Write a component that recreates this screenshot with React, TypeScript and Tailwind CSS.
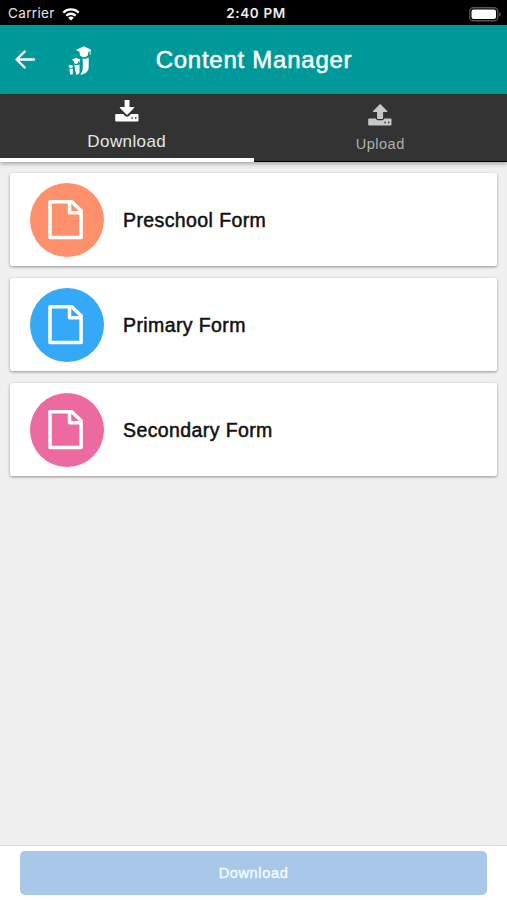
// App.tsx - Content manager screen with download / upload tabs and a list of forms

import React, { useState } from 'react';

type TabName = 'download' | 'upload';

interface FormItem {
    id: number;
    title: string;
    color: string;
}

const forms: FormItem[] = [
    { id: 1, title: 'Preschool Form', color: 'bg-[#fe916b]' },
    { id: 2, title: 'Primary Form', color: 'bg-[#36a8f8]' },
    { id: 3, title: 'Secondary Form', color: 'bg-[#ec6a9f]' },
];

const WifiIcon: React.FC = () => (
    <svg width="18" height="13" viewBox="0 0 18 13" fill="none" stroke="#fff" strokeWidth="2.3">
        <path d="M1.3 4.6a11 11 0 0 1 15.4 0" />
        <path d="M4.3 7.7a6.7 6.7 0 0 1 9.4 0" />
        <path d="M6.2 9.8a4 4 0 0 1 5.6 0L9 12.6z" fill="#fff" stroke="none" />
    </svg>
);

const BatteryIcon: React.FC = () => (
    <svg width="33" height="15" viewBox="0 0 33 15">
        <rect x="0.75" y="0.75" width="28" height="13" rx="3.6" fill="none" stroke="#555" strokeWidth="1.3" />
        <rect x="2.5" y="2.5" width="24.5" height="9.5" rx="2" fill="#fff" />
        <path d="M30.2 5.2q1.7.6 1.7 2.2t-1.7 2.2z" fill="#555" />
    </svg>
);

const BackIcon: React.FC = () => (
    <svg width="22" height="20" viewBox="0 0 22 20" fill="none" stroke="#fff" strokeWidth="2.4" strokeLinecap="round" strokeLinejoin="round">
        <path d="M20 9.5H2.6M10.7 1.5l-8.1 8 8.1 8" />
    </svg>
);

// Three growing students with graduation caps
const Logo: React.FC = () => (
    <svg width="24" height="30" viewBox="0 0 24 30" fill="#fff">
        <path d="M8 4.1 15.8.3l7.7 3.8-1.1.7.4 3.7h-1l-.1-3.1-1.6.8v1.9c0 1.8-1.6 3.1-4.1 3.1s-4.3-1.3-4.3-3.1V5.9z" />
        <path d="M14.5 12.6c2 .6 4.2.3 6.2-1.1v9.6c0 4.1-2.7 6.9-7.6 7.6-.7.1-.9-.4-.4-.9 1.5-1.5 2.1-3.4 2.1-6.5 0-3.3.1-6-.3-8.7z" />
        <path d="M3.9 13.8 8.1 11.7l4.5 2.1-.7.5v2.2h-.7v-1.8l-.8.4c.2 1.8-.7 2.8-2.3 2.8s-2.3-1-2.2-2.6z" />
        <path d="M6.3 18.6c1.7.9 3.5.8 5.2-.4v7.6c0 1.8-1.2 2.9-3.6 3 .3-1.2.1-2-.5-3z" />
        <path d="m.2 20 2.5-1.2 2.7 1.2-.9.7c0 1-.7 1.7-1.7 1.7s-1.6-.7-1.6-1.6z" />
        <path d="M1.5 22.8c.9.4 2.3.3 3.3-.2v4.8c0 .8-.7 1.2-1.5 1.2-.8-.1-1.3-.5-1.3-1.3z" />
    </svg>
);

const DownloadIcon: React.FC = () => (
    <svg width="24" height="22" viewBox="0 0 24 22" fill="currentColor">
        <path d="M9.6 0h4.9v7h4.1c.6 0 .8.6.4 1l-6.3 6.5a.9.9 0 0 1-1.3 0L5 8c-.4-.4-.2-1 .4-1h4.2z" />
        <path
            fillRule="evenodd"
            d="M1.4 14h6.8l2 2c1.1 1 2.7 1 3.8 0l2-2h6.3c.7 0 1.2.5 1.2 1.2v5.2c0 .7-.5 1.2-1.2 1.2H1.4c-.7 0-1.2-.5-1.2-1.2v-5.2c0-.7.5-1.2 1.2-1.2zM16.4 17.2h1.5v1.6h-1.5zM20 17.2h1.5v1.6H20z"
        />
    </svg>
);

const UploadIcon: React.FC = () => (
    <svg width="24" height="22" viewBox="0 0 24 22" fill="currentColor">
        <path d="M9.8 15h4.6c.4 0 .7-.3.7-.7V8h3.7c.6 0 .8-.6.4-1L12.8.4a.9.9 0 0 0-1.3 0L5.1 7c-.4.4-.2 1 .4 1h3.6v6.3c0 .4.3.7.7.7z" />
        <path
            fillRule="evenodd"
            d="M1.4 14.5h6.5c.3 1.2 1.2 1.8 2.4 1.8h3.5c1.2 0 2.1-.6 2.4-1.8h6.1c.7 0 1.2.5 1.2 1.2v4.7c0 .7-.5 1.2-1.2 1.2H1.4c-.7 0-1.2-.5-1.2-1.2v-4.7c0-.7.5-1.2 1.2-1.2zM16.4 17.7h1.5v1.6h-1.5zM20 17.7h1.5v1.6H20z"
        />
    </svg>
);

const FileIcon: React.FC = () => (
    <svg width="36" height="40" viewBox="0 0 36 40" fill="none" stroke="#fff" strokeWidth="3.5" strokeLinejoin="round">
        <path d="M2 1.8h21.8l9.3 9v26.6H2z" />
        <path d="M21.5 1.8v10.9h11.6" />
    </svg>
);

const App: React.FC = () => {
    const [activeTab, setActiveTab] = useState<TabName>('download');

    return (
        <div className="flex h-screen w-full flex-col overflow-hidden bg-[#f0f0f0] font-['Liberation_Sans',Arial,sans-serif]">
            {/* Status bar */}
            <div className="grid h-[25px] shrink-0 grid-cols-3 items-center bg-black pt-[3px] text-white font-['Inter',sans-serif]">
                <div className="flex items-center gap-[7px] pl-[8px]">
                    <span className="text-[13.5px] leading-none tracking-[0.35px] text-[#e4e4e4]">Carrier</span>
                    <WifiIcon />
                </div>
                <span className="pl-[5px] text-center text-[13.5px] font-semibold leading-none tracking-[0.65px] text-[#eee]">2:40 PM</span>
                <div className="flex justify-end pr-[5px]">
                    <BatteryIcon />
                </div>
            </div>

            {/* Header */}
            <header className="grid h-[69px] shrink-0 grid-cols-[100px_1fr_100px] items-center bg-[#009999]">
                <div className="flex items-center gap-[32px] pl-[14px]">
                    <button aria-label="Back">
                        <BackIcon />
                    </button>
                    <div className="pt-[2px]">
                        <Logo />
                    </div>
                </div>
                <h1 className="pl-px text-center text-[24px] leading-none tracking-[0.75px] text-white [-webkit-text-stroke:0.5px_white]">
                    Content Manager
                </h1>
            </header>

            {/* Tabs */}
            <nav className="z-10 grid h-[68px] shrink-0 grid-cols-2 bg-[#333] shadow-[0_2px_4px_rgba(0,0,0,0.3)]">
                <button
                    onClick={() => setActiveTab('download')}
                    className={`flex flex-col items-center border-b-4 pt-[6px] ${
                        activeTab === 'download' ? 'border-white text-white' : 'border-transparent text-[#bbb]'
                    }`}
                >
                    <DownloadIcon />
                    <span className="mt-[11px] text-[17px] leading-none tracking-[0.4px] text-[#e6e6e6]">Download</span>
                </button>
                <button
                    onClick={() => setActiveTab('upload')}
                    className={`flex flex-col items-center pt-[10px] ${
                        activeTab === 'upload' ? 'border-b-4 border-white text-white' : 'border-b border-black text-[#c8c8c8]'
                    }`}
                >
                    <UploadIcon />
                    <span className="mt-[11px] text-[14.5px] leading-none tracking-[0.5px] text-[#b0b0b0]">Upload</span>
                </button>
            </nav>

            {/* List of forms */}
            <main className="flex flex-1 flex-col gap-3 px-[10px] pt-[11px]">
                {forms.map((form) => (
                    <div
                        key={form.id}
                        className="flex h-[93px] items-center gap-5 rounded-[2px] bg-white pl-[20px] shadow-[0_1px_3px_rgba(0,0,0,0.4)]"
                    >
                        <div className={`flex size-[74px] items-center justify-center rounded-full pr-[2px] ${form.color}`}>
                            <FileIcon />
                        </div>
                        <span className="-ml-px pt-[2px] text-[19.5px] leading-none tracking-[0.4px] text-[#111] [-webkit-text-stroke:0.5px_#111]">
                            {form.title}
                        </span>
                    </div>
                ))}
            </main>

            {/* Bottom action */}
            <footer className="h-[55px] shrink-0 border-t border-[#dcdcdc] bg-white px-[20px] pt-[5px]">
                <button className="h-[44px] w-full rounded-[5px] bg-[#a9c8e9] text-[14.5px] leading-none tracking-[0.65px] text-[#f3faff] [-webkit-text-stroke:0.45px_#f3faff]">
                    Download
                </button>
            </footer>
        </div>
    );
};

export default App;
